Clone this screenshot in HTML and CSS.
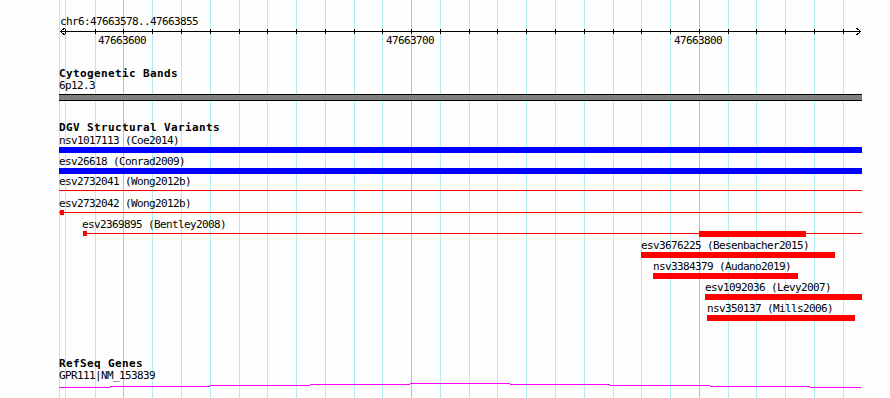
FILE: index.html
```html
<!DOCTYPE html>
<html>
<head>
  <title>chr6:47663578..47663855</title>
  <link rel="stylesheet" href="styles.css">
</head>
<body>
  <div class="browser">
    <!-- 10bp grid, drawn behind the tracks -->
    <svg class="grid" width="890" height="398">
      <path class="minor" d="M59.5 0V398 M65.5 0V398 M95.5 0V398 M152.5 0V398 M181.5 0V398 M210.5 0V398 M239.5 0V398 M267.5 0V398 M296.5 0V398 M325.5 0V398 M354.5 0V398 M382.5 0V398 M440.5 0V398 M469.5 0V398 M497.5 0V398 M526.5 0V398 M555.5 0V398 M584.5 0V398 M613.5 0V398 M641.5 0V398 M670.5 0V398 M728.5 0V398 M756.5 0V398 M785.5 0V398 M814.5 0V398 M843.5 0V398"/>
      <path class="major" d="M123.5 0V398 M411.5 0V398 M699.5 0V398"/>
    </svg>

    <svg class="ruler" width="890" height="48">
      <text class="ruler-text" x="60" y="25">chr6:47663578..47663855</text>
      <line class="axis" x1="60" y1="31.5" x2="861" y2="31.5"/>
      <polyline class="axis" points="64.5,28 60.5,31.5 64.5,35"/>
      <polyline class="axis" points="856.5,28 860.5,31.5 856.5,35"/>
      <path class="axis" d="M65.5 29V34 M95.5 29V34 M123.5 29V34 M152.5 29V34 M181.5 29V34 M210.5 29V34 M239.5 29V34 M267.5 29V34 M296.5 29V34 M325.5 29V34 M354.5 29V34 M382.5 29V34 M411.5 29V34 M440.5 29V34 M469.5 29V34 M497.5 29V34 M526.5 29V34 M555.5 29V34 M584.5 29V34 M613.5 29V34 M641.5 29V34 M670.5 29V34 M699.5 29V34 M728.5 29V34 M756.5 29V34 M785.5 29V34 M814.5 29V34 M843.5 29V34"/>
      <text class="ruler-text" x="98" y="44">47663600</text>
      <text class="ruler-text" x="386" y="44">47663700</text>
      <text class="ruler-text" x="674" y="44">47663800</text>
    </svg>

    <div class="track cyto">
      <div class="track-name">Cytogenetic Bands</div>
      <div class="feature-label">6p12.3</div>
      <div class="band"></div>
    </div>

    <div class="track dgv">
      <div class="track-name">DGV Structural Variants</div>
      <div class="features">
        <div class="feature" style="top:0px;left:0px;width:803px">
          <div class="feature-label">nsv1017113 (Coe2014)</div>
          <div class="bar gain"></div>
        </div>
        <div class="feature" style="top:21px;left:0px;width:803px">
          <div class="feature-label">esv26618 (Conrad2009)</div>
          <div class="bar gain"></div>
        </div>
        <div class="feature" style="top:41px;left:0px;width:803px">
          <div class="feature-label">esv2732041 (Wong2012b)</div>
          <div class="line loss"></div>
        </div>
        <div class="feature" style="top:63px;left:0px;width:803px">
          <div class="feature-label">esv2732042 (Wong2012b)</div>
          <div class="line loss"></div>
          <div class="nub loss" style="left:1px"></div>
        </div>
        <div class="feature" style="top:84px;left:23px;width:780px">
          <div class="feature-label">esv2369895 (Bentley2008)</div>
          <div class="line loss" style="left:1px"></div>
          <div class="nub loss" style="left:1px"></div>
        </div>
        <div class="feature" style="top:84px;left:640px;width:107px">
          <div class="bar loss"></div>
        </div>
        <div class="feature" style="top:105px;left:582px;width:194px">
          <div class="feature-label">esv3676225 (Besenbacher2015)</div>
          <div class="bar loss"></div>
        </div>
        <div class="feature" style="top:126px;left:594px;width:145px">
          <div class="feature-label">nsv3384379 (Audano2019)</div>
          <div class="bar loss"></div>
        </div>
        <div class="feature" style="top:147px;left:646px;width:157px">
          <div class="feature-label">esv1092036 (Levy2007)</div>
          <div class="bar loss"></div>
        </div>
        <div class="feature" style="top:168px;left:648px;width:148px">
          <div class="feature-label">nsv350137 (Mills2006)</div>
          <div class="bar loss"></div>
        </div>
      </div>
    </div>

    <div class="track refseq">
      <div class="track-name">RefSeq Genes</div>
      <div class="feature-label">GPR111|NM_153839</div>
      <svg class="gene" width="803" height="6">
        <rect x="0" y="5" width="51" height="1"/>
        <rect x="51" y="4" width="100" height="1"/>
        <rect x="151" y="3" width="100" height="1"/>
        <rect x="251" y="2" width="100" height="1"/>
        <rect x="351" y="1" width="100" height="1"/>
        <rect x="451" y="2" width="100" height="1"/>
        <rect x="551" y="3" width="100" height="1"/>
        <rect x="651" y="4" width="100" height="1"/>
        <rect x="751" y="5" width="51" height="1"/>
      </svg>
    </div>
  </div>
</body>
</html>
```

FILE: styles.css
```css
body {
  margin: 0;
  background: #fdfefd;
  font-family: "DejaVu Sans Mono", "Liberation Mono", monospace;
  font-size: 11px;
  letter-spacing: -0.62px;
  color: #000;
}

.browser {
  position: relative;
  width: 890px;
  height: 398px;
  overflow: hidden;
}

.grid {
  position: absolute;
  top: 0;
  left: 0;
  shape-rendering: crispEdges;
}

.grid .minor {
  stroke: #aeeeee;
  stroke-width: 1;
}

.grid .major {
  stroke: #8ccfe8;
  stroke-width: 1;
}

.ruler {
  display: block;
  position: relative;
}

.ruler-text {
  font-family: "DejaVu Sans Mono", "Liberation Mono", monospace;
  font-size: 11px;
  letter-spacing: -0.62px;
  fill: #000;
}

.axis {
  stroke: #000;
  stroke-width: 1;
  fill: none;
  shape-rendering: crispEdges;
}

.track {
  position: relative;
  margin-left: 59px;
  width: 803px;
}

.track-name {
  font-weight: bold;
  letter-spacing: 0.38px;
  line-height: 12px;
}

.feature-label {
  line-height: 12px;
  white-space: nowrap;
}

.cyto {
  padding-top: 20px;
}

.band {
  margin-top: 2px;
  height: 5px;
  background: #808080;
  border-top: 1px solid #000;
  border-bottom: 1px solid #000;
}

.dgv {
  margin-top: 21px;
}

.features {
  position: relative;
  height: 190px;
}

.feature {
  position: absolute;
  height: 20px;
}

.feature .feature-label {
  line-height: 13px;
}

.bar {
  position: absolute;
  top: 13px;
  left: 0;
  right: 0;
  height: 6px;
}

.line {
  position: absolute;
  top: 15px;
  left: 0;
  right: 0;
  height: 1px;
}

.nub {
  position: absolute;
  top: 13px;
  width: 4px;
  height: 5px;
}

.gain {
  background: #0000ff;
}

.loss {
  background: #ff0000;
}

.refseq {
  margin-top: 34px;
}

.gene {
  display: block;
  shape-rendering: crispEdges;
  fill: #ff00ff;
}
```
